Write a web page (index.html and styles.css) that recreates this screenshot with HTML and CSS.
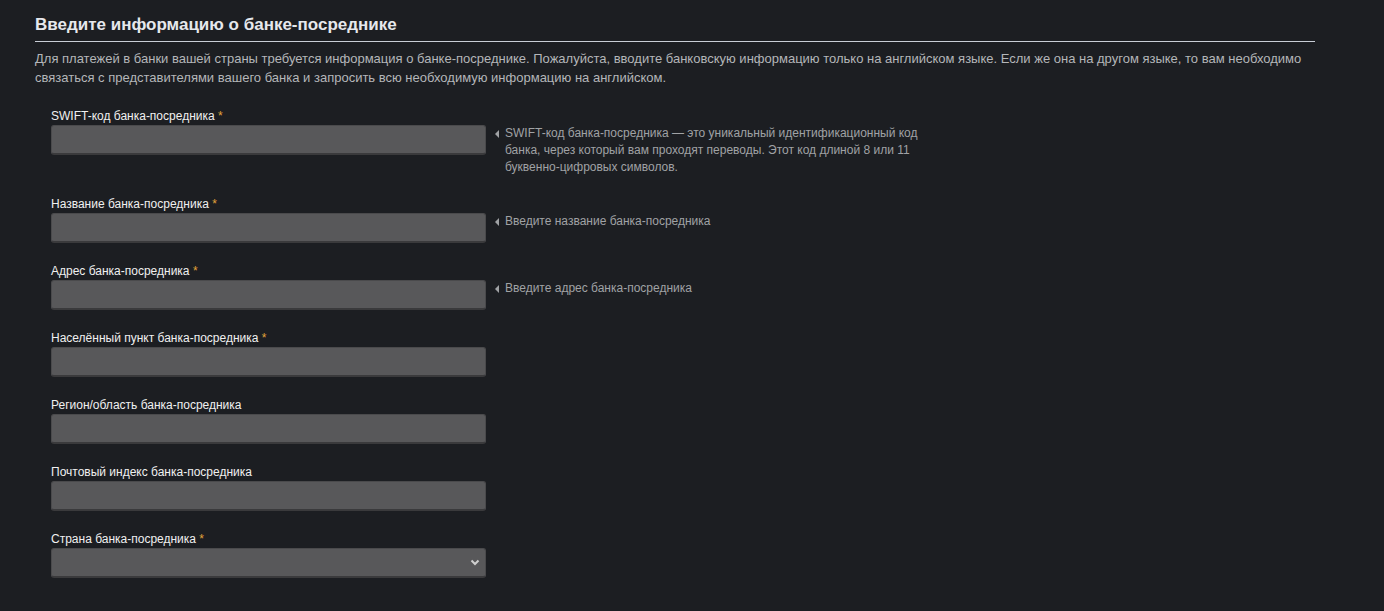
FILE: index.html
```html
<!DOCTYPE html>
<html lang="ru">
<head>
<meta charset="utf-8">
<link rel="stylesheet" href="styles.css">
</head>
<body>
<div class="page">
  <h2 class="title">Введите информацию о банке-посреднике</h2>
  <p class="intro">Для платежей в банки вашей страны требуется информация о банке-посреднике. Пожалуйста, вводите банковскую информацию только на английском языке. Если же она на другом языке, то вам необходимо связаться с представителями вашего банка и запросить всю необходимую информацию на английском.</p>

  <div class="fields">
    <div class="row">
      <div class="field">
        <label class="label">SWIFT-код банка-посредника <span class="req">*</span></label>
        <input class="input" type="text">
      </div>
      <div class="help"><span class="tri"></span><span class="help-text">SWIFT-код банка-посредника — это уникальный идентификационный код банка, через который вам проходят переводы. Этот код длиной 8 или 11 буквенно-цифровых символов.</span></div>
    </div>
    <div class="row">
      <div class="field">
        <label class="label">Название банка-посредника <span class="req">*</span></label>
        <input class="input" type="text">
      </div>
      <div class="help"><span class="tri"></span><span class="help-text">Введите название банка-посредника</span></div>
    </div>
    <div class="row">
      <div class="field">
        <label class="label">Адрес банка-посредника <span class="req">*</span></label>
        <input class="input" type="text">
      </div>
      <div class="help"><span class="tri"></span><span class="help-text">Введите адрес банка-посредника</span></div>
    </div>
    <div class="row">
      <div class="field">
        <label class="label">Населённый пункт банка-посредника <span class="req">*</span></label>
        <input class="input" type="text">
      </div>
    </div>
    <div class="row">
      <div class="field">
        <label class="label">Регион/область банка-посредника</label>
        <input class="input" type="text">
      </div>
    </div>
    <div class="row">
      <div class="field">
        <label class="label">Почтовый индекс банка-посредника</label>
        <input class="input" type="text">
      </div>
    </div>
    <div class="row">
      <div class="field">
        <label class="label">Страна банка-посредника <span class="req">*</span></label>
        <div class="select">
          <svg class="chev" width="10" height="7" viewBox="0 0 10 7"><path d="M1.5 1.5 L5 5 L8.5 1.5" fill="none" stroke="#cfcfcf" stroke-width="2"/></svg>
        </div>
      </div>
    </div>
  </div>
</div>
</body>
</html>
```

FILE: styles.css
```css
html, body {
  margin: 0;
  padding: 0;
  background: #1c1e22;
  height: 100%;
}
body {
  font-family: "Liberation Sans", Arial, sans-serif;
  color: #d8d8d8;
}
.page {
  padding: 15px 69px 0 35px;
}
.title {
  margin: 0;
  font-size: 17px;
  font-weight: bold;
  color: #e6e8ec;
  line-height: 20px;
  padding-bottom: 6px;
  border-bottom: 1px solid #c9ced6;
}
.intro {
  margin: 7px 0 0;
  font-size: 13px;
  line-height: 19px;
  color: #b4b6b9;
}
.fields {
  padding-left: 16px;
  margin-top: 22px;
}
.row {
  display: flex;
  margin-bottom: 21px;
}
.field {
  width: 435px;
  display: flex;
  flex-direction: column;
}
.label {
  font-size: 12px;
  line-height: 15px;
  color: #f0f0f0;
  margin-bottom: 1px;
}
.req {
  color: #e2a33a;
}
.input, .select {
  box-sizing: border-box;
  height: 30px;
  width: 435px;
  margin: 0;
  background: #58585a;
  border: 1px solid #4a4a4c;
  border-bottom: 2px solid #3a3a3c;
  border-radius: 3px;
}
.select {
  display: flex;
  align-items: center;
  justify-content: flex-end;
  padding-right: 5px;
}
.help {
  padding-top: 16px;
  margin-left: 9px;
  display: flex;
  align-items: flex-start;
  width: 430px;
}
.tri {
  flex: none;
  width: 0;
  height: 0;
  margin-top: 5px;
  margin-right: 6px;
  border-top: 4px solid transparent;
  border-bottom: 4px solid transparent;
  border-right: 4px solid #a0a2a5;
}
.help-text {
  font-size: 12px;
  line-height: 17px;
  color: #a0a2a5;
}
```
